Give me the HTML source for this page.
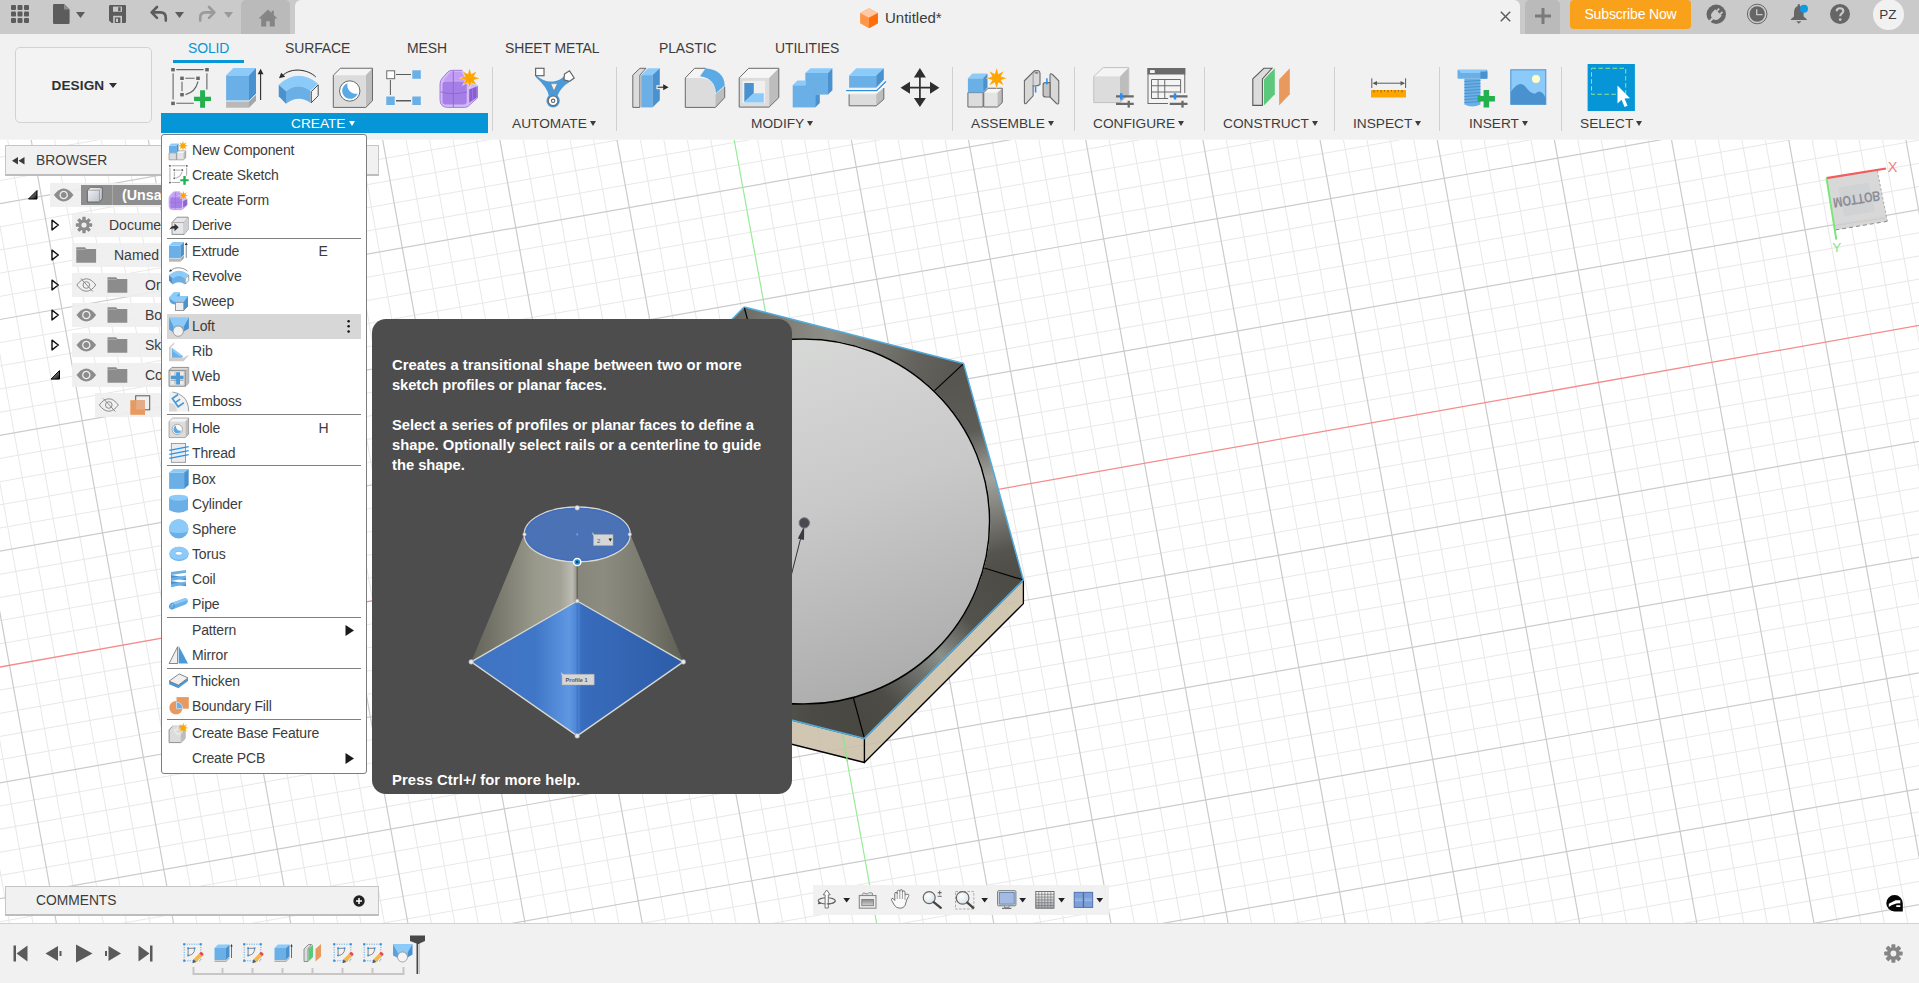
<!DOCTYPE html>
<html><head><meta charset="utf-8"><title>Fusion</title>
<style>
*{box-sizing:border-box;margin:0;padding:0}
html,body{width:1919px;height:983px;overflow:hidden;background:#fff;font-family:"Liberation Sans",sans-serif;color:#3c3c3c}
.abs{position:absolute}
#cv{position:absolute;left:0;top:0;width:1919px;height:983px}
#topbar{position:absolute;left:0;top:0;width:1919px;height:34px;background:#f1f1f1}
#toolbar{position:absolute;left:0;top:34px;width:1919px;height:105px;background:#f1f1f1}
.tbg{position:absolute;top:0;height:34px;background:#cacaca}
.tab{position:absolute;top:40px;font-size:13.95px;color:#3c3c3c;white-space:nowrap;letter-spacing:-0.1px}
.grp{position:absolute;top:115.5px;font-size:13.7px;color:#3c3c3c;white-space:nowrap}
.grp i{display:inline-block;width:0;height:0;border-left:3.5px solid transparent;border-right:3.5px solid transparent;border-top:5px solid #3c3c3c;margin-left:3px;vertical-align:2px}
.sep{position:absolute;top:67px;width:1px;height:64px;background:#d0d0d0}
svg{position:absolute;overflow:visible}
.mi{position:absolute;left:192px;font-size:14px;color:#3c3c3c;white-space:nowrap;line-height:16px;letter-spacing:-0.15px}
.msep{position:absolute;left:167px;width:194px;height:1px;background:#7f7f7f}
.brow{position:absolute;height:24px;background:rgba(238,238,238,.9)}
.btx{position:absolute;font-size:14px;color:#3c3c3c;white-space:nowrap;line-height:16px}
.tt{position:absolute;left:392px;font-size:14.75px;letter-spacing:0.05px;font-weight:bold;color:#fff;white-space:nowrap;line-height:20px}
</style></head><body>
<svg id="cv" width="1919" height="983" viewBox="0 0 1919 983">
<defs>
<clipPath id="cvclip"><rect x="0" y="139" width="1919" height="784"/></clipPath>
<linearGradient id="gCirc" x1="0.25" y1="0" x2="0.6" y2="1">
<stop offset="0" stop-color="#d9dbd9"/><stop offset="0.5" stop-color="#c9c9c9"/><stop offset="1" stop-color="#adadad"/></linearGradient>
<linearGradient id="gTop" gradientUnits="userSpaceOnUse" x1="744" y1="307" x2="964" y2="364">
<stop offset="0" stop-color="#6d6d67"/><stop offset="0.2" stop-color="#7f7f78"/><stop offset="0.4" stop-color="#90908a"/><stop offset="0.55" stop-color="#7e7e77"/><stop offset="0.8" stop-color="#63625d"/><stop offset="1" stop-color="#575651"/></linearGradient>
<linearGradient id="gRight" gradientUnits="userSpaceOnUse" x1="964" y1="364" x2="1023" y2="580">
<stop offset="0" stop-color="#55544f"/><stop offset="0.3" stop-color="#5d5c57"/><stop offset="0.52" stop-color="#a3a39d"/><stop offset="0.66" stop-color="#83837d"/><stop offset="0.85" stop-color="#55544f"/><stop offset="1" stop-color="#4b4a45"/></linearGradient>
<linearGradient id="gBR" gradientUnits="userSpaceOnUse" x1="1023" y1="580" x2="864" y2="738">
<stop offset="0" stop-color="#4b4a45"/><stop offset="0.3" stop-color="#53524d"/><stop offset="0.5" stop-color="#8b908b"/><stop offset="0.62" stop-color="#6f716c"/><stop offset="0.8" stop-color="#4d4c47"/><stop offset="1" stop-color="#484742"/></linearGradient>
<linearGradient id="gBot" gradientUnits="userSpaceOnUse" x1="864" y1="738" x2="646" y2="683">
<stop offset="0" stop-color="#484742"/><stop offset="0.25" stop-color="#4b4a45"/><stop offset="0.5" stop-color="#5a5a55"/><stop offset="1" stop-color="#4a4944"/></linearGradient>
</defs>
<g clip-path="url(#cvclip)">
<rect x="0" y="139" width="1919" height="784" fill="#fff"/>
<path d="M-945.9 -207.1L-578.7 1812.5M-923.2 -211.2L-556.0 1808.4M-900.5 -215.2L-533.3 1804.4M-877.8 -219.3L-510.6 1800.3M-832.4 -227.3L-465.2 1792.3M-809.7 -231.4L-442.5 1788.2M-787.0 -235.4L-419.8 1784.2M-764.3 -239.5L-397.1 1780.1M-718.9 -247.5L-351.7 1772.1M-696.2 -251.6L-329.0 1768.0M-673.5 -255.6L-306.3 1764.0M-650.8 -259.7L-283.6 1759.9M-605.4 -267.7L-238.2 1751.9M-582.7 -271.8L-215.5 1747.8M-560.0 -275.8L-192.8 1743.8M-537.3 -279.9L-170.1 1739.7M-491.9 -287.9L-124.7 1731.7M-469.2 -292.0L-102.0 1727.6M-446.5 -296.0L-79.3 1723.6M-423.8 -300.1L-56.6 1719.5M-378.4 -308.1L-11.2 1711.5M-355.7 -312.2L11.5 1707.4M-333.0 -316.2L34.2 1703.4M-310.3 -320.3L56.9 1699.3M-264.9 -328.3L102.3 1691.3M-242.2 -332.4L125.0 1687.2M-219.5 -336.4L147.7 1683.2M-196.8 -340.5L170.4 1679.1M-151.4 -348.5L215.8 1671.1M-128.7 -352.6L238.5 1667.0M-106.0 -356.6L261.2 1663.0M-83.3 -360.7L283.9 1658.9M-37.9 -368.7L329.3 1650.9M-15.2 -372.8L352.0 1646.8M7.5 -376.8L374.7 1642.8M30.2 -380.9L397.4 1638.7M75.6 -388.9L442.8 1630.7M98.3 -393.0L465.5 1626.6M121.0 -397.0L488.2 1622.6M143.7 -401.1L510.9 1618.5M189.1 -409.1L556.3 1610.5M211.8 -413.2L579.0 1606.4M234.5 -417.2L601.7 1602.4M257.2 -421.3L624.4 1598.3M302.6 -429.3L669.8 1590.3M325.3 -433.4L692.5 1586.2M348.0 -437.4L715.2 1582.2M370.7 -441.5L737.9 1578.1M416.1 -449.5L783.3 1570.1M438.8 -453.6L806.0 1566.0M461.5 -457.6L828.7 1562.0M484.2 -461.7L851.4 1557.9M529.6 -469.7L896.8 1549.9M552.3 -473.8L919.5 1545.8M575.0 -477.8L942.2 1541.8M597.7 -481.9L964.9 1537.7M643.1 -489.9L1010.3 1529.7M665.8 -494.0L1033.0 1525.6M688.5 -498.0L1055.7 1521.6M711.2 -502.1L1078.4 1517.5M756.6 -510.1L1123.8 1509.5M779.3 -514.2L1146.5 1505.4M802.0 -518.2L1169.2 1501.4M824.7 -522.3L1191.9 1497.3M870.1 -530.3L1237.3 1489.3M892.8 -534.4L1260.0 1485.2M915.5 -538.4L1282.7 1481.2M938.2 -542.5L1305.4 1477.1M983.6 -550.5L1350.8 1469.1M1006.3 -554.6L1373.5 1465.0M1029.0 -558.6L1396.2 1461.0M1051.7 -562.7L1418.9 1456.9M1097.1 -570.7L1464.3 1448.9M1119.8 -574.8L1487.0 1444.8M1142.5 -578.8L1509.7 1440.8M1165.2 -582.9L1532.4 1436.7M1210.6 -590.9L1577.8 1428.7M1233.3 -595.0L1600.5 1424.6M1256.0 -599.0L1623.2 1420.6M1278.7 -603.1L1645.9 1416.5M1324.1 -611.1L1691.3 1408.5M1346.8 -615.2L1714.0 1404.4M1369.5 -619.2L1736.7 1400.4M1392.2 -623.3L1759.4 1396.3M1437.6 -631.3L1804.8 1388.3M1460.3 -635.4L1827.5 1384.2M1483.0 -639.4L1850.2 1380.2M1505.7 -643.5L1872.9 1376.1M1551.1 -651.5L1918.3 1368.1M1573.8 -655.6L1941.0 1364.0M1596.5 -659.6L1963.7 1360.0M1619.2 -663.7L1986.4 1355.9M1664.6 -671.7L2031.8 1347.9M1687.3 -675.8L2054.5 1343.8M1710.0 -679.8L2077.2 1339.8M1732.7 -683.9L2099.9 1335.7M1778.1 -691.9L2145.3 1327.7M1800.8 -696.0L2168.0 1323.6M1823.5 -700.0L2190.7 1319.6M1846.2 -704.1L2213.4 1315.5M1891.6 -712.1L2258.8 1307.5M1914.3 -716.2L2281.5 1303.4M1937.0 -720.2L2304.2 1299.4M1959.7 -724.3L2326.9 1295.3M2005.1 -732.3L2372.3 1287.3M2027.8 -736.4L2395.0 1283.2M2050.5 -740.4L2417.7 1279.2M2073.2 -744.5L2440.4 1275.1M2118.6 -752.5L2485.8 1267.1M2141.3 -756.6L2508.5 1263.0M2164.0 -760.6L2531.2 1259.0M2186.7 -764.7L2553.9 1254.9M2232.1 -772.7L2599.3 1246.9M2254.8 -776.8L2622.0 1242.8M2277.5 -780.8L2644.7 1238.8M2300.2 -784.9L2667.4 1234.7M2345.6 -792.9L2712.8 1226.7M2368.3 -797.0L2735.5 1222.6M2391.0 -801.0L2758.2 1218.6M2413.7 -805.1L2780.9 1214.5M-737.5 -221.1L2327.0 -766.5M-733.4 -198.6L2331.1 -744.0M-729.4 -176.2L2335.1 -721.6M-725.3 -153.7L2339.2 -699.1M-717.1 -108.9L2347.4 -654.3M-713.0 -86.4L2351.5 -631.8M-709.0 -64.0L2355.5 -609.4M-704.9 -41.5L2359.6 -586.9M-696.7 3.3L2367.8 -542.1M-692.6 25.8L2371.9 -519.6M-688.6 48.2L2375.9 -497.2M-684.5 70.7L2380.0 -474.7M-676.3 115.5L2388.2 -429.9M-672.2 138.0L2392.3 -407.4M-668.2 160.4L2396.3 -385.0M-664.1 182.9L2400.4 -362.5M-655.9 227.7L2408.6 -317.7M-651.8 250.2L2412.7 -295.2M-647.8 272.6L2416.7 -272.8M-643.7 295.1L2420.8 -250.3M-635.5 339.9L2429.0 -205.5M-631.4 362.4L2433.1 -183.0M-627.4 384.8L2437.1 -160.6M-623.3 407.3L2441.2 -138.1M-615.1 452.1L2449.4 -93.3M-611.0 474.6L2453.5 -70.8M-607.0 497.0L2457.5 -48.4M-602.9 519.5L2461.6 -25.9M-594.7 564.3L2469.8 18.9M-590.6 586.8L2473.9 41.4M-586.6 609.2L2477.9 63.8M-582.5 631.7L2482.0 86.3M-574.3 676.5L2490.2 131.1M-570.2 699.0L2494.3 153.6M-566.2 721.4L2498.3 176.0M-562.1 743.9L2502.4 198.5M-553.9 788.7L2510.6 243.3M-549.8 811.2L2514.7 265.8M-545.8 833.6L2518.7 288.2M-541.7 856.1L2522.8 310.7M-533.5 900.9L2531.0 355.5M-529.4 923.4L2535.1 378.0M-525.4 945.8L2539.1 400.4M-521.3 968.3L2543.2 422.9M-513.1 1013.1L2551.4 467.7M-509.0 1035.6L2555.5 490.2M-505.0 1058.0L2559.5 512.6M-500.9 1080.5L2563.6 535.1M-492.7 1125.3L2571.8 579.9M-488.6 1147.8L2575.9 602.4M-484.6 1170.2L2579.9 624.8M-480.5 1192.7L2584.0 647.3M-472.3 1237.5L2592.2 692.1M-468.2 1260.0L2596.3 714.6M-464.2 1282.4L2600.3 737.0M-460.1 1304.9L2604.4 759.5M-451.9 1349.7L2612.6 804.3M-447.8 1372.2L2616.7 826.8M-443.8 1394.6L2620.7 849.2M-439.7 1417.1L2624.8 871.7M-431.5 1461.9L2633.0 916.5M-427.4 1484.4L2637.1 939.0M-423.4 1506.8L2641.1 961.4M-419.3 1529.3L2645.2 983.9M-411.1 1574.1L2653.4 1028.7M-407.0 1596.6L2657.5 1051.2M-403.0 1619.0L2661.5 1073.6M-398.9 1641.5L2665.6 1096.1M-390.7 1686.3L2673.8 1140.9M-386.6 1708.8L2677.9 1163.4M-382.6 1731.2L2681.9 1185.8M-378.5 1753.7L2686.0 1208.3" stroke="#e8e8e8" stroke-width="1" fill="none"/>
<path d="M-968.6 -203.1L-601.4 1816.5M-855.1 -223.3L-487.9 1796.3M-741.6 -243.5L-374.4 1776.1M-628.1 -263.7L-260.9 1755.9M-514.6 -283.9L-147.4 1735.7M-401.1 -304.1L-33.9 1715.5M-287.6 -324.3L79.6 1695.3M-174.1 -344.5L193.1 1675.1M-60.6 -364.7L306.6 1654.9M52.9 -384.9L420.1 1634.7M166.4 -405.1L533.6 1614.5M279.9 -425.3L647.1 1594.3M393.4 -445.5L760.6 1574.1M506.9 -465.7L874.1 1553.9M733.9 -506.1L1101.1 1513.5M847.4 -526.3L1214.6 1493.3M960.9 -546.5L1328.1 1473.1M1074.4 -566.7L1441.6 1452.9M1187.9 -586.9L1555.1 1432.7M1301.4 -607.1L1668.6 1412.5M1414.9 -627.3L1782.1 1392.3M1528.4 -647.5L1895.6 1372.1M1641.9 -667.7L2009.1 1351.9M1755.4 -687.9L2122.6 1331.7M1868.9 -708.1L2236.1 1311.5M1982.4 -728.3L2349.6 1291.3M2095.9 -748.5L2463.1 1271.1M2209.4 -768.7L2576.6 1250.9M2322.9 -788.9L2690.1 1230.7M-741.6 -243.5L2322.9 -788.9M-721.2 -131.3L2343.3 -676.7M-700.8 -19.1L2363.7 -564.5M-680.4 93.1L2384.1 -452.3M-660.0 205.3L2404.5 -340.1M-639.6 317.5L2424.9 -227.9M-619.2 429.7L2445.3 -115.7M-598.8 541.9L2465.7 -3.5M-578.4 654.1L2486.1 108.7M-537.6 878.5L2526.9 333.1M-517.2 990.7L2547.3 445.3M-496.8 1102.9L2567.7 557.5M-476.4 1215.1L2588.1 669.7M-456.0 1327.3L2608.5 781.9M-435.6 1439.5L2628.9 894.1M-415.2 1551.7L2649.3 1006.3M-394.8 1663.9L2669.7 1118.5" stroke="#cbcbcb" stroke-width="1.200" fill="none"/>
<!-- axes -->
<path d="M-217.5 705.7L1939.0 321.9" stroke="#f58b8b" stroke-width="1.3" fill="none"/>
<path d="M722.4 75.1L885.6 972.7" stroke="#98ec98" stroke-width="1.200" fill="none"/>
<!-- model: side faces -->
<path d="M1023.4 580L1023.4 603.6L864.4 762.5L864.4 738.4Z" fill="#ccc0aa" fill-opacity=".9" stroke="#000" stroke-width="1.3" stroke-linejoin="round"/>
<path d="M864.4 738.4L864.4 762.5L646.3 707.6L646.3 683.5Z" fill="#ccc0aa" fill-opacity=".9" stroke="#000" stroke-width="1.3" stroke-linejoin="round"/>
<path d="M842.800 734.500L847.500 761.500" stroke="#8fe68f" stroke-width="1.300"/>
<!-- loft faces -->
<path d="M744.2 307L963.6 363.6L934.5 390.6A186 183 0 0 0 754.3 345.2Z" fill="url(#gTop)"/>
<path d="M963.6 363.6L1023.4 580L984.2 568A186 183 0 0 0 934.5 390.6Z" fill="url(#gRight)"/>
<path d="M1023.4 580L864.4 738.4L853.3 697.5A186 183 0 0 0 984.2 568Z" fill="url(#gBR)"/>
<path d="M864.4 738.4L646.3 683.5L673.6 652A186 183 0 0 0 853.3 697.5Z" fill="url(#gBot)"/>
<path d="M646.3 683.5L586.2 466.7L624 475.7A186 183 0 0 0 673.6 652Z" fill="#4d4c47"/>
<path d="M586.2 466.7L744.2 307L754.3 345.2A186 183 0 0 0 624 475.7Z" fill="#686862"/>
<!-- loft edges -->
<path d="M744.2 307L754.3 345.2M963.6 363.6L934.5 390.6M1023.4 580L984.2 568M864.4 738.4L853.3 697.5" stroke="#000" stroke-width="1.2" fill="none"/>
<!-- circle -->
<ellipse cx="804" cy="521.5" rx="185.6" ry="182.6" fill="url(#gCirc)" stroke="#000" stroke-width="1.5"/>
<!-- outlines -->
<path d="M646.3 683.5L586.2 466.7L744.2 307" stroke="#50acde" stroke-width="1.500" fill="none"/>
<path d="M744.2 307L963.6 363.6L1023.4 580L864.4 738.4L646.3 683.5" stroke="#50acde" stroke-width="1.500" fill="none" stroke-linejoin="round"/>
<!-- origin marker -->
<path d="M787.500 590L801 537" stroke="#333" stroke-width="1"/>
<path d="M804.200 526L797.800 538.500L804 540Z" fill="#3a3a40"/>
<circle cx="804.3" cy="522.9" r="5.2" fill="#4a4852" stroke="#777" stroke-width="1"/>
<!-- view cube -->
<path d="M1834.600 225.500L1886.600 217.600L1887.300 221.300L1835.300 230Z" fill="#d2d2d2" fill-opacity=".92"/>
<path d="M1826.500 178.200L1877.300 170.600L1886.600 217.600L1834.600 225.500Z" fill="#d6d6d6" fill-opacity=".94"/>
<path d="M1838.500 187.500L1868.500 182.500L1875 211.500L1844 216.500Z" fill="#cfd0d2" fill-opacity=".75"/>
<path d="M1834.600 225.500L1886.600 217.600" stroke="#c4c4c4" stroke-width="0.800" fill="none"/>
<path d="M1877.300 170.600L1886.600 217.600L1887.300 221.300" stroke="#9a9a9a" stroke-width="0.800" stroke-dasharray="2.500 2" fill="none"/>
<path d="M1835.300 230L1887.300 221.300" stroke="#8a8a8a" stroke-width="1" stroke-dasharray="4 3" fill="none"/>
<path d="M1826.500 178.200L1885.900 168.500" stroke="#f25c5c" stroke-width="2.200"/>
<path d="M1826.500 178.200L1836.300 239.700" stroke="#76e676" stroke-width="1.900"/>
<text transform="translate(1832.600 198.300) rotate(-9.200) scale(1 -1.280)" font-size="11" font-weight="bold" fill="#8b8e97" font-family="Liberation Sans">MOTTOB</text>
<text x="1887.800" y="172" font-size="14.500" fill="#f47e7e" font-family="Liberation Sans">X</text>
<text x="1832.300" y="252" font-size="13.500" fill="#7fe67f" font-family="Liberation Sans">Y</text>
</g>
</svg>
<div id="topbar">
<div class="tbg" style="left:0;width:302px"></div>
<div class="abs" style="left:241px;top:0;width:49px;height:34px;background:#bababa;border-radius:5px 5px 0 0"></div>
<div class="abs" style="left:295px;top:0;width:12px;height:34px;background:#f1f1f1;border-radius:6px 0 0 0"></div>
<div class="tbg" style="left:1513px;width:406px"></div>
<div class="abs" style="left:1508px;top:0;width:12px;height:34px;background:#f1f1f1;border-radius:0 6px 0 0"></div>
<div class="abs" style="left:1525px;top:0;width:35px;height:34px;background:#bababa;border-radius:5px 5px 0 0"></div>
<!-- left icons -->
<svg style="left:11px;top:5px" width="18" height="18" viewBox="0 0 18 18" fill="#5c5c5c"><rect x="0" y="0" width="5" height="5" rx="1"/><rect x="6.5" y="0" width="5" height="5" rx="1"/><rect x="13" y="0" width="5" height="5" rx="1"/><rect x="0" y="6.5" width="5" height="5" rx="1"/><rect x="6.5" y="6.5" width="5" height="5" rx="1"/><rect x="13" y="6.5" width="5" height="5" rx="1"/><rect x="0" y="13" width="5" height="5" rx="1"/><rect x="6.5" y="13" width="5" height="5" rx="1"/><rect x="13" y="13" width="5" height="5" rx="1"/></svg>
<svg style="left:53px;top:4px" width="17" height="20" viewBox="0 0 17 20"><path d="M1.2 0h9.8l5.6 5.6V18.8a1.2 1.2 0 0 1-1.2 1.2H1.2A1.2 1.2 0 0 1 0 18.8V1.2A1.2 1.2 0 0 1 1.2 0Z" fill="#5c5c5c"/><path d="M11 0v5.6h5.6Z" fill="#8e8e8e"/></svg>
<svg style="left:76px;top:12px" width="9" height="6" viewBox="0 0 9 6"><path d="M0 0h9L4.5 6Z" fill="#5c5c5c"/></svg>
<svg style="left:109px;top:5px" width="17" height="18" viewBox="0 0 17 18"><path d="M1.2 0H16a1 1 0 0 1 1 1V17a1 1 0 0 1-1 1H2.6L0 15.4V1.2A1.2 1.2 0 0 1 1.200 0Z" fill="#5c5c5c"/><rect x="4" y="1.6" width="9" height="5.2" fill="#cacaca"/><rect x="9.2" y="2.2" width="2.4" height="4" fill="#5c5c5c"/><rect x="4.2" y="10.8" width="8.8" height="7.2" fill="#cacaca"/><rect x="5.8" y="12.4" width="5.6" height="5.6" fill="#5c5c5c"/><rect x="7" y="13.6" width="2" height="3.4" fill="#cacaca"/></svg>
<svg style="left:150px;top:6px" width="18" height="16" viewBox="0 0 18 16"><path d="M7 1L1.6 6.4L7 11.800" stroke="#5c5c5c" stroke-width="2.6" fill="none" stroke-linecap="round" stroke-linejoin="round"/><path d="M2.4 6.400H10.500Q15.800 6.400 15.800 12V14.600" stroke="#5c5c5c" stroke-width="2.6" fill="none" stroke-linecap="round"/></svg>
<svg style="left:175px;top:12px" width="9" height="6" viewBox="0 0 9 6"><path d="M0 0h9L4.5 6Z" fill="#5c5c5c"/></svg>
<svg style="left:198px;top:6px" width="18" height="16" viewBox="0 0 18 16"><path d="M11 1L16.400 6.4L11 11.800" stroke="#9a9a9a" stroke-width="2.6" fill="none" stroke-linecap="round" stroke-linejoin="round"/><path d="M15.600 6.400H7.500Q2.200 6.400 2.200 12V14.600" stroke="#9a9a9a" stroke-width="2.600" fill="none" stroke-linecap="round"/></svg>
<svg style="left:224px;top:12px" width="9" height="6" viewBox="0 0 9 6"><path d="M0 0h9L4.5 6Z" fill="#9a9a9a"/></svg>
<svg style="left:258px;top:9px" width="20" height="18" viewBox="0 0 20 18"><path d="M10 0.500L0.500 9.400H3.200V17.500H8.300V12.200H11.700V17.500H16.800V9.400H19.500L15.800 5.900V1.800H13.600V3.900Z" fill="#858585"/></svg>
<!-- title -->
<svg style="left:860px;top:7.500px" width="18" height="20.500" viewBox="0 0 18 20.500"><path d="M9 0.300L17.900 5V15.300L9 20.200L0.100 15.300V5Z" fill="#ff9548"/><path d="M9 0.300L17.900 5L9 9.800L0.100 5Z" fill="#ffc9a3"/><path d="M9 9.800L17.900 5V15.300L9 20.200Z" fill="#ff6e08"/></svg>
<div class="abs" style="left:885px;top:8.800px;font-size:15px;line-height:18px;color:#3c3c3c;white-space:nowrap">Untitled*</div>
<svg style="left:1500px;top:11px" width="11" height="11" viewBox="0 0 11 11"><path d="M0.800 0.800L10.200 10.200M10.200 0.800L0.800 10.200" stroke="#5c5c5c" stroke-width="1.5"/></svg>
<svg style="left:1535px;top:8px" width="16" height="16" viewBox="0 0 16 16"><path d="M8 0V16M0 8H16" stroke="#7a7a7a" stroke-width="3"/></svg>
<div class="abs" style="left:1570px;top:0;width:121px;height:29px;background:#f9a11b;border-radius:4px;color:#fff;font-size:14.1px;line-height:28px;text-align:center;letter-spacing:-0.2px">Subscribe Now</div>
<!-- right icons -->
<svg style="left:1706px;top:3.500px" width="21" height="21" viewBox="0 0 21 21"><circle cx="10.250" cy="10.250" r="9.700" fill="#666"/><g transform="translate(10.250 10.800) rotate(45)"><path d="M-4.600 -3.200H4.600V0.500Q4.600 5.200 0 5.200Q-4.600 5.200 -4.600 0.500Z" fill="#cacaca"/><path d="M0 4.500V11" stroke="#cacaca" stroke-width="2.200"/><path d="M-2.300 -6.500V-3M2.300 -6.500V-3" stroke="#cacaca" stroke-width="1.700"/></g></svg>
<svg style="left:1746px;top:3px" width="22" height="22" viewBox="0 0 22 22"><circle cx="11.200" cy="11" r="9.800" fill="none" stroke="#666" stroke-width="1"/><circle cx="11.200" cy="11" r="7.700" fill="#666"/><path d="M10.700 6.200V11.600H16.500" stroke="#cacaca" stroke-width="1.300" fill="none"/></svg>
<svg style="left:1788px;top:3px" width="22" height="23" viewBox="0 0 22 23"><path d="M9.700 1.200H11.900V3C14.500 4 15.600 6.500 15.600 10V13.500L18.800 16.200V17H2.800V16.200L6 13.500V10C6 6.500 7.100 4 9.700 3Z" fill="#666"/><path d="M8.200 18.200H13.400L10.800 20.800Z" fill="#666"/><circle cx="16" cy="5.750" r="4" fill="#0d9be3"/></svg>
<svg style="left:1829px;top:3px" width="22" height="22" viewBox="0 0 22 22"><circle cx="11" cy="11" r="10" fill="#666"/><path d="M7.700 8.300C7.700 6.300 9.200 5.300 11 5.300S14.300 6.400 14.300 8.200C14.300 10.400 11.200 10.500 11.200 13.200" stroke="#cacaca" stroke-width="2.100" fill="none"/><circle cx="11.200" cy="16.600" r="1.350" fill="#cacaca"/></svg>
<div class="abs" style="left:1872.500px;top:-1.500px;width:31px;height:31px;border-radius:16px;background:#f1f1f1;font-size:13.5px;line-height:31px;text-align:center;color:#3c3c3c">PZ</div>
</div>
<div id="toolbar"></div><div id="tbline" class="abs" style="left:0;top:139px;width:1919px;height:1px;background:#f5f5f5"></div>
<div class="abs" style="left:15px;top:47px;width:137px;height:76px;border:1px solid #d2d2d2;border-radius:5px;background:#f3f3f3"></div>
<div class="abs" style="left:51.500px;top:77.500px;font-size:13.600px;font-weight:bold;color:#303030;line-height:16px;letter-spacing:0.1px">DESIGN</div>
<svg style="left:109px;top:83px" width="8" height="5" viewBox="0 0 8 5"><path d="M0 0h8L4 5Z" fill="#303030"/></svg>
<div class="tab" style="left:188px;color:#0696d7">SOLID</div>
<div class="abs" style="left:173px;top:60px;width:71px;height:3px;background:#0696d7"></div>
<div class="tab" style="left:285px">SURFACE</div>
<div class="tab" style="left:407px">MESH</div>
<div class="tab" style="left:505px">SHEET METAL</div>
<div class="tab" style="left:659px">PLASTIC</div>
<div class="tab" style="left:775px">UTILITIES</div>
<div class="abs" style="left:161px;top:113px;width:327px;height:20px;background:#0696d7"></div>
<div class="grp" style="left:291px;color:#fff">CREATE<i style="border-top-color:#fff"></i></div>
<div class="grp" style="left:512px">AUTOMATE<i></i></div>
<div class="grp" style="left:751px">MODIFY<i></i></div>
<div class="grp" style="left:971px">ASSEMBLE<i></i></div>
<div class="grp" style="left:1093px">CONFIGURE<i></i></div>
<div class="grp" style="left:1223px">CONSTRUCT<i></i></div>
<div class="grp" style="left:1353px">INSPECT<i></i></div>
<div class="grp" style="left:1469px">INSERT<i></i></div>
<div class="grp" style="left:1580px">SELECT<i></i></div>
<div class="sep" style="left:492px"></div>
<div class="sep" style="left:616px"></div>
<div class="sep" style="left:952px"></div>
<div class="sep" style="left:1074px"></div>
<div class="sep" style="left:1204px"></div>
<div class="sep" style="left:1334px"></div>
<div class="sep" style="left:1439px"></div>
<div class="sep" style="left:1561px"></div>
<svg style="left:0;top:0" width="1919" height="140" viewBox="0 0 1919 140">
<defs>
<path id="star8" d="M0 -10L1.700 -4.100L7.100 -7.100L4.100 -1.700L10 0L4.100 1.700L7.100 7.100L1.700 4.100L0 10L-1.700 4.100L-7.100 7.100L-4.100 1.700L-10 0L-4.100 -1.700L-7.100 -7.100L-1.700 -4.100Z"/>
</defs>
<!-- sketch -->
<g id="icSketch">
<g fill="#666">
<rect x="171.200" y="68" width="3.600" height="3.400"/><rect x="205.200" y="68" width="3.600" height="3.400"/><rect x="171.200" y="101.700" width="3.600" height="3.400"/>
<rect x="180.200" y="76.600" width="3.600" height="3.400"/><rect x="196.200" y="76.600" width="3.600" height="3.400"/><rect x="180.200" y="93" width="3.600" height="3.400"/>
</g>
<path d="M176.300 69.600H203.600M173.100 73.200V99.500M206.900 73.200V89.500M176.300 103.300H193.800M185.300 78.300H194.600M182 81.700V91.200" stroke="#666" stroke-width="1.100" fill="none"/>
<path d="M198 81.500Q195.500 92 185.500 94.600" stroke="#666" stroke-width="1.100" fill="none"/>
<path d="M194 96.800H200.100V90.200H205V96.800H211V101H205V107.800H200.100V101H194Z" fill="#22b14c"/>
</g>
<!-- extrude -->
<g id="icExtrude">
<path d="M226.100 101.200H249V107.700H226.100Z" fill="#b8b8b8"/><path d="M249 101.200L256 94.500V100.700L249 107.700Z" fill="#a6a6a6"/>
<path d="M226.100 75.300H249V100.700H226.100Z" fill="#6ab0e6"/><path d="M226.100 75.300L233.300 68H256L249 75.300Z" fill="#8ccbf9"/><path d="M249 75.300L256 68V93.700L249 100.700Z" fill="#4a92cf"/>
<path d="M226.100 101H249L256 94.200" stroke="#e8f2fb" stroke-width="0.700" fill="none"/><path d="M260.600 72.800V100" stroke="#2a2a2a" stroke-width="1.100"/><path d="M260.600 68.700L257.700 74.200H263.500Z" fill="#2a2a2a"/>
</g>
<!-- revolve -->
<g id="icRevolve">
<path d="M315.800 77C308.500 69.500 291 66.500 281.800 76.300" stroke="#2a2a2a" stroke-width="1" fill="none"/><path d="M279 78.200L281.200 72.800L285.200 76.700Z" fill="#2a2a2a"/>
<path d="M278.750 84.700Q298.300 67.500 318.200 83.800L310.400 90.750Q298.300 81.500 286 91.200Z" fill="#8ccbf9"/>
<path d="M286 91.200Q298.300 81.500 310.400 90.750V102.800Q298.300 94.500 286 103.700Z" fill="#6ab0e6"/>
<path d="M278.750 84.700L286 91.200V103.700L278.750 96.200Z" fill="#4a92cf"/>
<path d="M311.250 91.600L318.200 84.900V95.750L311.250 102.800Z" fill="#f4f4f4" stroke="#4a4a4a" stroke-width="1"/>
</g>
<!-- hole -->
<g id="icHole">
<path d="M333.300 75.300L340.400 68.250H372.500L365.800 75.300Z" fill="#f4f4f4"/><path d="M365.800 75.300L372.500 68.250V100.750L365.800 107.400Z" fill="#bdbdbd"/><path d="M333.300 75.300H365.800V107.400H333.300Z" fill="#dcdcdc"/>
<path d="M333.300 75.300L340.400 68.250H372.500V100.750L365.800 107.400H333.300Z" fill="none" stroke="#6a6a6a" stroke-width="1"/>
<circle cx="349.750" cy="91" r="10.200" fill="#fff" stroke="#6a6a6a" stroke-width="1"/>
<path d="M347.500 83.300A8 8 0 1 0 357.700 93.500A8.500 8.500 0 0 1 347.500 83.300Z" fill="#5aaae6"/>
</g>
<!-- pattern -->
<rect x="386.750" y="70.800" width="7.900" height="7.900" fill="#fff" stroke="#6a6a6a" stroke-width="1"/>
<rect x="412.300" y="70.300" width="8.500" height="8.500" fill="#6ab0e6"/><rect x="386.250" y="96.500" width="8.500" height="8.500" fill="#6ab0e6"/><rect x="412.300" y="96.500" width="8.500" height="8.500" fill="#6ab0e6"/>
<path d="M396 74.500H411M390.400 80V95" stroke="#5a5a5a" stroke-width="1" fill="none"/><path d="M396 100.750H411" stroke="#5a5a5a" stroke-width="1.500"/>
<!-- form -->
<g id="icForm">
<path d="M440 84Q440 80.500 442.500 77.800L447.800 72Q449.500 70.300 452 70.300H462L477.500 86.200V97.800L468.500 106Q467 107.400 464.500 107.400H448Q440 107.400 440 99.500Z" fill="#d3b9f6"/>
<path d="M443.300 80.750L450.800 71.800H461.700L465.800 80.750Z" fill="#c29df6"/>
<path d="M445.500 81.600H463.700Q466.700 81.600 466.700 84.600V101.500Q466.700 104.500 463.700 104.500H445.500Q442.500 104.500 442.500 101.500V84.600Q442.500 81.600 445.500 81.600Z" fill="#a67ee8"/>
<path d="M469.200 89.500L476.800 86.500V97.500L469.200 102.800Z" fill="#8a5fd0"/><path d="M472.500 88.200V100.500" stroke="#9f78de" stroke-width="0.800"/>
<path d="M453.300 70.800V107M440.500 91.800Q453 95.500 467 92" stroke="#8f68cc" stroke-width="0.900" fill="none"/>
<path d="M440 84Q440 80.500 442.500 77.800L447.800 72Q449.500 70.300 452 70.300H462L477.500 86.200V97.800L468.500 106Q467 107.400 464.500 107.400H448Q440 107.400 440 99.500Z" fill="none" stroke="#9468d8" stroke-width="0.800"/>
<use href="#star8" transform="translate(469.600 78.250) scale(1.080)" fill="#f2f2f2"/>
<use href="#star8" transform="translate(469.600 78.250) scale(0.960)" fill="#ffa500"/>
</g>
<!-- automate -->
<path d="M535.9 75.2Q544.7 82.700 553.500 81.400Q560 80.800 564 76.300L569.500 82Q560.500 87.200 557.200 96.500H549Q547.400 87.200 535.900 77.300Z" fill="#4a9ad9"/>
<path d="M550.700 83.600H557.500L553.900 91Z" fill="#f1f1f1" stroke="#777" stroke-width="0.600"/>
<circle cx="553.100" cy="100.800" r="6.700" fill="#4a9ad9"/>
<circle cx="553.100" cy="100.800" r="4.800" fill="#fff" stroke="#666" stroke-width="1.100"/><circle cx="553.100" cy="100.800" r="1.700" fill="#fff" stroke="#666" stroke-width="1.100"/>
<rect x="535.600" y="68.300" width="8.400" height="7.400" fill="#fff" stroke="#666" stroke-width="1.200"/>
<path d="M564.500 74L569.500 70.800L574.200 78L569.600 81.300L564 79.800Z" fill="#fff" stroke="#666" stroke-width="1.200"/>
<!-- press pull -->
<path d="M632.800 75.100L639.900 68.300H646L639.900 75.100V107.400H632.800Z" fill="#dcdcdc" stroke="#6a6a6a" stroke-width="1"/>
<path d="M641.200 75.100H652.500V107.400H641.200Z" fill="#6ab0e6"/><path d="M641.200 75.100L648.100 68.300H659.800L652.500 75.100Z" fill="#8ccbf9"/><path d="M652.500 75.100L659.800 68.300V100.300L652.500 107.400Z" fill="#4a92cf"/>
<rect x="656.400" y="85.200" width="6" height="4" fill="#f1f1f1"/>
<path d="M657.600 87.200H664" stroke="#2a2a2a" stroke-width="1.100"/><path d="M668.600 87.200L663.200 84.200V90.200Z" fill="#2a2a2a"/>
<!-- fillet -->
<path d="M685.300 77.900L694.600 68.300H706L697 77.900Z" fill="#f4f4f4"/>
<path d="M685.300 77.900H701Q715.400 78.500 715.400 94.300V107.400H685.300Z" fill="#dcdcdc"/>
<path d="M715.400 94.300L724.700 86.600V97.600L715.400 107.400Z" fill="#bdbdbd"/>
<path d="M685.300 107.400V77.900L694.600 68.300H705.600" fill="none" stroke="#6a6a6a" stroke-width="1"/><path d="M685.300 107.400H715.400L724.700 97.600V86.600" fill="none" stroke="#6a6a6a" stroke-width="1"/>
<path d="M705.600 68.300Q724 70 724.700 85.500L715.900 93.200Q715 78 700.100 76.200Z" fill="#5aaae6"/>
<!-- shell -->
<path d="M739.200 77.900L748.700 68.300H778.800L769.100 77.900Z" fill="#f6f6f6"/><path d="M769.100 77.900L778.800 68.300V97.600L769.100 107.100Z" fill="#bdbdbd"/><path d="M739.200 77.900H769.100V107.100H739.200Z" fill="#dcdcdc"/>
<path d="M739.200 77.900L748.700 68.300H778.800V97.600L769.100 107.100H739.200Z" fill="none" stroke="#6a6a6a" stroke-width="1"/>
<rect x="742.400" y="80.800" width="22.700" height="22.200" fill="#efefef"/>
<path d="M744.300 83.100H753.800V93.200L744.300 101.900Z" fill="#4a92cf"/><path d="M753.800 93.200H763.800V102.500H744.300V101.900Z" fill="#8ccbf9"/>
<!-- combine -->
<path d="M805.300 72.900H828V94.600H805.300Z" fill="#6ab0e6"/><path d="M805.300 72.900L810.500 68.300H832.400L828 72.900Z" fill="#8ccbf9"/><path d="M828 72.900L832.400 68.300V90.200L828 94.600Z" fill="#4a92cf"/>
<path d="M792.700 85.200H815.200V107.400H792.700Z" fill="#6ab0e6"/><path d="M792.700 85.200L797.400 80.400H805.300V85.200Z" fill="#8ccbf9"/><path d="M815.200 94.600H819.800V103L815.200 107.400Z" fill="#4a92cf"/>
<!-- offset face -->
<path d="M849.100 94.300H876.200V105.800H849.100Z" fill="#dcdcdc"/><path d="M876.200 94.300L883.800 87.700V99.200L876.200 105.800Z" fill="#bdbdbd"/>
<path d="M849.100 94.300V105.800H876.200L883.800 99.200V88" fill="none" stroke="#6a6a6a" stroke-width="1"/>
<path d="M849.100 75.400H876.200V87.700H849.100Z" fill="#6ab0e6"/><path d="M849.100 75.400L856.300 68.300H883.800L876.200 75.400Z" fill="#8ccbf9"/><path d="M876.200 75.400L883.800 68.300V79.500L876.200 87.700Z" fill="#4a92cf"/>
<path d="M846.100 91.700H876.700L886 82.500" fill="none" stroke="#fff" stroke-width="2.400"/>
<path d="M846.100 90.700H876.700L886 81.500" fill="none" stroke="#2d8ee0" stroke-width="1.300"/>
<!-- move -->
<path d="M919.900 76V99M908 87.700H932" stroke="#2e2e2e" stroke-width="1.700"/>
<path d="M919.900 68L925.900 77.500H913.900ZM919.900 107.100L925.900 98H913.900ZM900.500 87.700L910 81.700V93.700ZM939.400 87.700L930 81.700V93.700Z" fill="#2e2e2e"/>
<!-- new component -->
<g id="icNewComp">
<path d="M967.900 92.600H983.100V107H967.900Z" fill="#dcdcdc" stroke="#6a6a6a" stroke-width="1"/>
<path d="M983.750 92.600H997.500V107H983.750Z" fill="#e4e4e4"/><path d="M983.750 92.600L988.100 88.250H1002.250L997.500 92.600Z" fill="#f6f6f6"/><path d="M997.500 92.600L1002.250 88.250V102.600L997.500 107Z" fill="#bdbdbd"/>
<path d="M983.750 92.600V107H997.500L1002.250 102.600V88.250H988.100Z" fill="none" stroke="#6a6a6a" stroke-width="1"/>
<path d="M967.900 78.250H983.100V92.600H967.900Z" fill="#6ab0e6"/><path d="M967.900 78.250L972.500 73.500H987.500L983.100 78.250Z" fill="#8ccbf9"/><path d="M983.100 78.250L987.500 73.500V87.600L983.100 92.600Z" fill="#4a92cf"/>
<use href="#star8" transform="translate(996.600 78.250) scale(1.100)" fill="#f2f2f2"/>
<use href="#star8" transform="translate(996.600 78.250)" fill="#ffa500"/>
</g>
<!-- joint -->
<path d="M1024.400 80.750L1034.400 70.750Q1040 69.500 1040 73.500V84.500Q1037 86.500 1033.100 85.750V95.750L1026 103.500Q1024.400 104.500 1024.400 102Z" fill="#d8d8d8" stroke="#6a6a6a" stroke-width="1.100"/>
<path d="M1033.100 85.750V73.500Q1034 70.800 1036.500 70.800" fill="none" stroke="#8a8a8a" stroke-width="0.800"/>
<ellipse cx="1036.500" cy="72.800" rx="2" ry="1.100" fill="#8a8a8a"/>
<path d="M1050 75.500Q1050 72.500 1052.500 74.500L1058.750 80.750V102Q1058.750 105 1056.500 103.500L1050 97Z" fill="#d8d8d8" stroke="#6a6a6a" stroke-width="1.100"/>
<path d="M1043.100 84.500Q1043.100 82.600 1046 82.600H1050V97H1046Q1043.100 97 1043.100 95Z" fill="#c4c4c4" stroke="#6a6a6a" stroke-width="1.100"/>
<path d="M1035.600 86.400V92.600M1046.900 78.250V84.500" stroke="#1e90ff" stroke-width="1.500"/>
<!-- configure 1 -->
<path d="M1093.750 76.400L1103.100 67.600H1128.750L1120 76.400Z" fill="#f4f4f4"/><path d="M1120 76.400L1128.750 67.600V94.500L1120 102.600Z" fill="#bdbdbd"/><path d="M1093.750 76.400H1120V102.600H1093.750Z" fill="#dcdcdc"/>
<path d="M1093.750 76.400L1103.100 67.600H1128.750V94.500L1120 102.600H1093.750Z" fill="none" stroke="#c2c2c2" stroke-width="1"/>
<path d="M1116 96.400H1133.750M1116 103.900H1133.750" stroke="#6a6a6a" stroke-width="2.300"/><path d="M1128.750 100.750V107.600" stroke="#6a6a6a" stroke-width="2.300"/><path d="M1121.250 93.250V99.500" stroke="#1e90ff" stroke-width="2.500"/>
<!-- configure 2 -->
<rect x="1148" y="68.500" width="36.750" height="35" fill="#f4f4f4" stroke="#6a6a6a" stroke-width="1"/><rect x="1147.500" y="68" width="37.750" height="6.500" fill="#6a6a6a"/><rect x="1150" y="70.100" width="4.750" height="2.900" fill="#f4f4f4"/>
<path d="M1151.500 79.500H1180.600V98.500H1151.500ZM1158.100 79.500V98.500M1164.750 79.500V98.500M1151.500 85.750H1180.600M1151.500 92H1180.600" fill="none" stroke="#6a6a6a" stroke-width="1"/>
<rect x="1168" y="93" width="20" height="13" fill="#f1f1f1"/>
<path d="M1169.750 96.400H1187.500M1169.750 103.900H1187.500" stroke="#6a6a6a" stroke-width="2.300"/><path d="M1182.500 100.750V107.600" stroke="#6a6a6a" stroke-width="2.300"/><path d="M1175 93.250V99.500" stroke="#1e90ff" stroke-width="2.500"/>
<!-- construct -->
<path d="M1252.800 78.900L1263.900 68.250H1272L1262.400 78.900V105.400H1252.800Z" fill="#dcdcdc" stroke="#5a5a5a" stroke-width="1.100"/>
<path d="M1263.900 79.400L1274.800 68.250V94.300L1263.900 105.400Z" fill="#5cc87c"/>
<path d="M1279.100 79.400L1289.800 68.250V94.300L1279.100 105.400Z" fill="#e8995e"/>
<!-- inspect -->
<rect x="1371" y="90" width="35" height="7.500" fill="#ffa500"/>
<path d="M1374 90V92.500M1377.500 90V91.500M1381 90V92.500M1384.500 90V91.500M1388 90V92.500M1391.500 90V91.500M1395 90V92.500M1398.500 90V91.500M1402 90V92.500" stroke="#6a5a2a" stroke-width="0.800"/>
<path d="M1371.800 78.300V88M1405.600 78.300V88M1374 83.200H1403.500" stroke="#5a5a5a" stroke-width="1"/><path d="M1372.500 83.200L1377 81V85.400ZM1405 83.200L1400.500 81V85.400Z" fill="#5a5a5a"/>
<!-- insert bolt -->
<path d="M1464.400 78.700H1480.400V104.500Q1472.400 108.500 1464.400 104.500Z" fill="#6ab0e6"/>
<path d="M1464.400 81.500L1480.400 80.500M1464.400 84.500L1480.400 83.500M1464.400 87.500L1480.400 86.500M1464.400 90.500L1480.400 89.500M1464.400 93.500L1480.400 92.500M1464.400 96.500L1480.400 95.500M1464.400 99.500L1480.400 98.500M1464.400 102.500L1480.400 101.500" stroke="#4a92cf" stroke-width="1"/>
<path d="M1458.500 69.750H1486.400Q1487.400 69.750 1487.400 71V77.500Q1487.400 78.700 1486.400 78.700H1458.500Q1457.500 78.700 1457.500 77.500V71Q1457.500 69.750 1458.500 69.750Z" fill="#6ab0e6"/>
<path d="M1458.500 69.750H1486.400L1484 73H1461Z" fill="#8ccbf9"/><path d="M1480.400 71.500H1487.400V78.700H1480.400Z" fill="#4a92cf"/>
<path d="M1477.600 96H1483.600V90H1489.100V96H1494.900V101.400H1489.100V107.600H1483.600V101.400H1477.600Z" fill="#22b14c"/>
<!-- insert image -->
<rect x="1510.800" y="69.800" width="35" height="34.500" fill="#8ccbf9" stroke="#4a92cf" stroke-width="1"/>
<path d="M1510.800 92Q1520 78 1527 88.500Q1531 94 1535.500 93.500Q1541 88 1545.800 98V104.300H1510.800Z" fill="#4a92cf"/>
<circle cx="1536" cy="78.900" r="4" fill="#ffffc8"/>
<!-- select -->
<rect x="1587.600" y="64" width="47.300" height="47" fill="#0696d7"/>
<rect x="1591.500" y="68.250" width="34.200" height="26" fill="none" stroke="#8fe890" stroke-width="1" stroke-dasharray="4.500 2.500"/>
<path d="M1617.500 85.500V103.500L1621.500 99.800L1624.600 107L1627.600 105.700L1624.500 98.600L1630 98.300Z" fill="#fff"/>
</svg>
<!-- browser header -->
<div class="abs" style="left:5px;top:145px;width:374px;height:31px;background:#f1f1f1;border:1px solid #c6c6c6;border-bottom:2px solid #bdbdbd"></div>
<svg style="left:11.500px;top:156.500px" width="12.500" height="7.500" viewBox="0 0 13 9" preserveAspectRatio="none"><path d="M6.200 0V9L0 4.500ZM13 0V9L6.800 4.500Z" fill="#3a3a3a"/></svg>
<div class="btx" style="left:36px;top:152.700px;font-size:13.800px">BROWSER</div>
<!-- rows -->
<div class="brow" style="left:50px;top:183px;width:310px"></div>
<div class="abs" style="left:81px;top:185px;width:280px;height:20px;background:#8e8e8e"></div>
<div class="abs" style="left:112px;top:185px;width:1px;height:20px;background:#a8a8a8"></div>
<div class="brow" style="left:72px;top:213px;width:290px"></div>
<div class="brow" style="left:72px;top:243px;width:290px"></div>
<div class="brow" style="left:72px;top:273px;width:290px"></div>
<div class="brow" style="left:72px;top:303px;width:290px"></div>
<div class="brow" style="left:72px;top:333px;width:290px"></div>
<div class="brow" style="left:72px;top:363px;width:290px"></div>
<div class="brow" style="left:95px;top:393px;width:265px"></div>
<div class="btx" style="left:122px;top:187px;font-weight:bold;color:#fff;font-size:14.3px">(Unsaved)</div>
<div class="btx" style="left:109px;top:217px">Document Settings</div>
<div class="btx" style="left:114px;top:247px">Named Views</div>
<div class="btx" style="left:145px;top:277px">Origin</div>
<div class="btx" style="left:145px;top:307px">Bodies</div>
<div class="btx" style="left:145px;top:337px">Sketches</div>
<div class="btx" style="left:145px;top:367px">Construction</div>
<svg style="left:0;top:0" width="200" height="430" viewBox="0 0 200 430">
<defs>
<g id="eye"><path d="M-9.800 0Q-5 -6.500 0 -6.500Q5 -6.500 9.800 0Q5 6.500 0 6.500Q-5 6.500 -9.800 0Z" fill="#8c8c8c"/><circle cx="0" cy="0" r="3.600" fill="none" stroke="#eee" stroke-width="1.300"/></g>
<g id="eyeoff"><path d="M-9.500 0Q-5 -6.200 0 -6.200Q5 -6.200 9.500 0Q5 6.200 0 6.200Q-5 6.200 -9.500 0Z" fill="none" stroke="#8c8c8c" stroke-width="1"/><circle cx="0" cy="0" r="3.300" fill="none" stroke="#8c8c8c" stroke-width="1"/><path d="M-5.500 -6.500L6.500 6.500" stroke="#8c8c8c" stroke-width="1"/></g>
<g id="fold"><path d="M0 0H8.600L10 1.800H19.800V15.500H0Z" fill="#8c8c8c"/><path d="M0.500 2.300H9" stroke="#b5b5b5" stroke-width="0.700"/></g>
<path id="tri" d="M0.700 0.800L7 5.700L0.700 10.600Z" fill="#fff" stroke="#111" stroke-width="1.400" stroke-linejoin="round"/>
<linearGradient id="gTri" x1="0" y1="0" x2="1" y2="1"><stop offset="0.300" stop-color="#999"/><stop offset="1" stop-color="#000"/></linearGradient>
<path id="trid" d="M9 0V8.500H0.500Z" fill="url(#gTri)" stroke="#000" stroke-width="1" stroke-linejoin="round"/>
<linearGradient id="gCmp" x1="0" y1="0" x2="1" y2="1"><stop offset="0" stop-color="#f4f6fa"/><stop offset="1" stop-color="#b9bcc6"/></linearGradient>
</defs>
<use href="#trid" x="28" y="190.500"/>
<use href="#eye" x="63.700" y="195"/>
<path d="M87.400 190.200L90.500 187.300H102.300V198.800L99.400 202H87.400Z" fill="url(#gCmp)" stroke="#555" stroke-width="0.800"/><path d="M87.400 190.200H99.400V202M99.400 190.200L102.300 187.300" fill="none" stroke="#888" stroke-width="0.700"/>
<use href="#tri" x="51.300" y="219.300"/><use href="#tri" x="51.300" y="249.300"/><use href="#tri" x="51.300" y="279.300"/><use href="#tri" x="51.300" y="309.300"/><use href="#tri" x="51.300" y="339.300"/>
<use href="#trid" x="50.500" y="370.600"/>
<!-- gear -->
<g transform="translate(84 225)" fill="#8c8c8c"><circle r="5.600"/><g id="teeth"><rect x="-1.700" y="-8.200" width="3.400" height="16.400" rx="0.600"/><rect x="-1.700" y="-8.200" width="3.400" height="16.400" rx="0.600" transform="rotate(45)"/><rect x="-1.700" y="-8.200" width="3.400" height="16.400" rx="0.600" transform="rotate(90)"/><rect x="-1.700" y="-8.200" width="3.400" height="16.400" rx="0.600" transform="rotate(135)"/></g><circle r="2.600" fill="#eee"/></g>
<use href="#fold" x="76.300" y="247.200"/>
<use href="#eyeoff" x="86.300" y="285"/><use href="#fold" x="107.500" y="277.200"/>
<use href="#eye" x="86.300" y="315"/><use href="#fold" x="107.500" y="307.200"/>
<use href="#eye" x="86.300" y="345"/><use href="#fold" x="107.500" y="337.200"/>
<use href="#eye" x="86.300" y="375"/><use href="#fold" x="107.500" y="367.200"/>
<use href="#eyeoff" x="108.800" y="405"/>
<rect x="135.700" y="395.800" width="14" height="14" fill="none" stroke="#5a5a5a" stroke-width="1"/>
<rect x="130.300" y="400.200" width="14.700" height="14.600" fill="#e8995e"/><rect x="136.200" y="400.200" width="8.800" height="9.300" fill="#e2ad88"/>
</svg>
<!-- comments -->
<div class="abs" style="left:5px;top:886px;width:374px;height:30px;background:#f1f1f1;border:1px solid #c6c6c6;border-bottom:2px solid #bdbdbd"></div>
<div class="btx" style="left:36px;top:893px;font-size:13.8px">COMMENTS</div>
<svg style="left:353px;top:895px" width="12" height="12" viewBox="0 0 12 12"><circle cx="6" cy="6" r="5.700" fill="#222"/><path d="M6 3V9M3 6H9" stroke="#fff" stroke-width="1.500"/></svg>
<div class="abs" style="left:161px;top:134px;width:206px;height:640px;background:#fff;border:1px solid #7d7d7d;border-radius:3px"></div>
<div class="abs" style="left:167px;top:314px;width:194px;height:25px;background:#d7d7d7"></div>
<div class="msep" style="top:238.0px"></div>
<div class="msep" style="top:414.0px"></div>
<div class="msep" style="top:465.0px"></div>
<div class="msep" style="top:617.0px"></div>
<div class="msep" style="top:668.0px"></div>
<div class="msep" style="top:719.0px"></div>
<div class="mi" style="top:142px">New Component</div>
<div class="mi" style="top:167px">Create Sketch</div>
<div class="mi" style="top:192px">Create Form</div>
<div class="mi" style="top:217px">Derive</div>
<div class="mi" style="top:243px">Extrude</div>
<div class="mi" style="left:318.5px;top:243px">E</div>
<div class="mi" style="top:268px">Revolve</div>
<div class="mi" style="top:293px">Sweep</div>
<div class="mi" style="top:318px">Loft</div>
<div class="mi" style="top:343px">Rib</div>
<div class="mi" style="top:368px">Web</div>
<div class="mi" style="top:393px">Emboss</div>
<div class="mi" style="top:420px">Hole</div>
<div class="mi" style="left:318.5px;top:420px">H</div>
<div class="mi" style="top:445px">Thread</div>
<div class="mi" style="top:471px">Box</div>
<div class="mi" style="top:496px">Cylinder</div>
<div class="mi" style="top:521px">Sphere</div>
<div class="mi" style="top:546px">Torus</div>
<div class="mi" style="top:571px">Coil</div>
<div class="mi" style="top:596px">Pipe</div>
<div class="mi" style="top:622px">Pattern</div>
<svg style="left:345px;top:624.5px" width="9" height="11" viewBox="0 0 9 11"><path d="M0.500 0L9 5.500L0.500 11Z" fill="#1a1a1a"/></svg>
<div class="mi" style="top:647px">Mirror</div>
<div class="mi" style="top:673px">Thicken</div>
<div class="mi" style="top:698px">Boundary Fill</div>
<div class="mi" style="top:725px">Create Base Feature</div>
<div class="mi" style="top:750px">Create PCB</div>
<svg style="left:345px;top:752.5px" width="9" height="11" viewBox="0 0 9 11"><path d="M0.500 0L9 5.500L0.500 11Z" fill="#1a1a1a"/></svg>
<svg style="left:346px;top:319px" width="5" height="15" viewBox="0 0 5 15"><circle cx="2.600" cy="2.200" r="1.250" fill="#111"/><circle cx="2.600" cy="7.300" r="1.250" fill="#111"/><circle cx="2.600" cy="12.400" r="1.250" fill="#111"/></svg>
<svg style="left:0;top:0" width="400" height="780" viewBox="0 0 400 780">
<use href="#icNewComp" transform="translate(169 141) scale(.487) translate(-967.9 -68.25)"/>
<use href="#icSketch" transform="translate(169 165) scale(.495) translate(-171.2 -68)"/>
<use href="#icForm" transform="translate(169 190.9) scale(.485) translate(-440 -68.6)"/>
<use href="#icExtrude" transform="translate(169 241.9) scale(.5) translate(-226.1 -68)"/>
<use href="#icRevolve" transform="translate(169 267.5) scale(.5) translate(-278.75 -69.5)"/>
<use href="#icHole" transform="translate(169 418) scale(.5) translate(-333.3 -68.25)"/>
<!-- derive cy=225 -->
<g transform="translate(168.5 215)">
<path d="M3.500 7.500L8.500 2.200H19.600V14.500L15.600 19.400H3.500Z" fill="#e6e7ea" stroke="#7a7a7a" stroke-width="0.800"/>
<path d="M3.500 7.500H15.600V19.400M15.600 7.500L19.600 2.200" fill="none" stroke="#9a9a9a" stroke-width="0.700"/><path d="M15.600 7.500L19.600 2.200V14.500L15.600 19.400Z" fill="#cfd0d4"/>
<path d="M0.800 14.800Q2.500 10.500 6 11V8.400L10.200 12.300L6 16.200V13.700Q3 13.300 0.800 14.800Z" fill="#333"/>
</g>
<!-- sweep cy=301 -->
<g transform="translate(168.500 291)">
<path d="M0.600 6.500L5.200 1.400H11.300V5.200H19.400V15.200L15.300 19.400H6.900V13.500Q0.600 13.500 0.600 6.500Z" fill="#5aa2de"/>
<path d="M0.600 6.500L5.200 1.400H11.300L8 5.200H19.400L15.300 11.300H6.900Q3 10 0.600 6.500Z" fill="#8ccbf9"/>
<path d="M15.300 11.300L19.400 5.200V15.200L15.300 19.400Z" fill="#4a92cf"/>
<rect x="6.900" y="11.300" width="8.400" height="8.100" fill="#eee" stroke="#8a8a8a" stroke-width="0.800"/>
</g>
<!-- loft cy=326 -->
<g transform="translate(168.500 316)">
<path d="M0.600 1.350H20.400L15.300 10.500H5.200Z" fill="#8ccbf9"/>
<path d="M0.600 1.350L5.200 10.500V16.600L0.600 13.600Z" fill="#5aa2de"/>
<path d="M20.400 1.350V12.500L15.300 15.600V10.500Z" fill="#4a92cf"/>
<path d="M5.200 10.500H15.300V15.600H5.200Z" fill="#6ab0e6"/>
<circle cx="9.700" cy="15.100" r="5.200" fill="#f2f2f2" stroke="#8a8a8a" stroke-width="0.800"/>
</g>
<!-- rib cy=351 -->
<g transform="translate(168.500 341)">
<path d="M0.500 6.300L5.800 1.200V3L2.300 6.500V16.800H14.800L19.800 13.900V15L15 20.300H0.500Z" fill="#cdcdcd"/>
<path d="M2.300 16.800H14.800L19.800 13.900" fill="none" stroke="#e6e6e6" stroke-width="0.600"/>
<path d="M3.200 6.800L14.600 15.200L13 16.800H3.200Z" fill="#6ab0e6"/><path d="M3.200 6.800L14.600 15.200L11 15.200L4.800 10.500Z" fill="#8ccbf9"/>
</g>
<!-- web cy=376 -->
<g transform="translate(168.500 366)">
<path d="M0.500 4.400L3.400 1.400H20.200V17L16.700 20.300H0.500Z" fill="#d8d8d8" stroke="#7a7a7a" stroke-width="0.800"/>
<path d="M16.700 4.400L20.200 1.400V17L16.700 20.300Z" fill="#bdbdbd"/><path d="M0.500 4.400H16.700V20.300" fill="none" stroke="#7a7a7a" stroke-width="0.800"/>
<rect x="2.400" y="6.200" width="12.600" height="12.300" fill="#ececec"/>
<path d="M2.400 10.300H15M2.400 14.500H15M6.500 6.200V18.500M10.800 6.200V18.500" stroke="#9a9a9a" stroke-width="0.700"/>
<path d="M7.600 6.200H11.500V9.700H15V13.300H11.500V18.500H7.600V13.300H2.400V9.700H7.600Z" fill="#4a9ad9"/>
</g>
<!-- emboss cy=401 -->
<g transform="translate(168.500 391)">
<path d="M0.500 1.400Q6 -0.500 12 3.500Q20.200 8.500 20.200 15.800V20.400H0.500Z" fill="#f1f1f1"/>
<path d="M0.500 12Q8 12 8.500 20.400H0.500Z" fill="#d9d9d9"/>
<path d="M4 1Q10 1.500 15 6Q20 11 20.200 20.400" fill="none" stroke="#8a8a8a" stroke-width="0.800"/>
<g transform="translate(9.600 9.600) rotate(-35)" stroke="#4a9ad9" stroke-width="1.700" fill="none"><path d="M3.500 -5H-3.500V5H3.500M-3.500 0H2.500"/></g>
</g>
<!-- thread cy=453 -->
<g transform="translate(168.500 443)">
<rect x="2.800" y="0.400" width="14.300" height="18.900" fill="#ececec" stroke="#8a8a8a" stroke-width="0.800"/>
<path d="M0.800 7.400L20.200 3.700M0.800 11.400L20.200 7.700M0.800 15.400L20.200 11.700" stroke="#2b90ea" stroke-width="1.200"/>
</g>
<!-- box cy=479 -->
<g transform="translate(168.500 469)">
<path d="M0.600 3.500H15.600V19.900H0.600Z" fill="#6ab0e6"/><path d="M0.600 3.500L5.100 0.100H20.200L15.600 3.500Z" fill="#8ccbf9"/><path d="M15.600 3.500L20.200 0.100V15.900L15.600 19.900Z" fill="#4a92cf"/>
</g>
<!-- cylinder cy=504 -->
<g transform="translate(168.500 494)">
<path d="M0.600 3.700V16Q10 21.500 19.500 16V3.700Z" fill="#6ab0e6"/><ellipse cx="10.050" cy="3.700" rx="9.450" ry="3" fill="#8ccbf9"/>
</g>
<!-- sphere cy=529 -->
<g transform="translate(168.500 519)">
<circle cx="10.200" cy="9.900" r="9.700" fill="#6ab0e6"/><path d="M0.500 9.900A9.700 9.700 0 0 1 19.900 9.900Q19.900 11.500 19.500 12.500Q10 15.500 0.900 12.500Q0.500 11.500 0.500 9.900Z" fill="#8ccbf9"/>
</g>
<!-- torus cy=554 -->
<g transform="translate(168.500 544)">
<ellipse cx="10.500" cy="9.900" rx="9.700" ry="7.100" fill="#6ab0e6"/><ellipse cx="10.500" cy="9.300" rx="9.500" ry="6.500" fill="#8ccbf9"/><ellipse cx="10.300" cy="9.300" rx="3.600" ry="1.900" fill="#fff" stroke="#6ab0e6" stroke-width="0.600"/>
</g>
<!-- coil cy=579 -->
<g transform="translate(168.500 569)">
<path d="M2.500 3L17.500 0.900V3.700L2.500 6Z" fill="#6ab0e6"/><path d="M2.500 6L17.500 8.500V11.300L2.500 9Z" fill="#4a92cf"/>
<path d="M2.500 9L17.500 6.500V9.300L2.500 12Z" fill="#6ab0e6"/><path d="M2.500 12L17.500 14.500V17.300L2.500 15Z" fill="#4a92cf"/>
<path d="M2.500 15L17.500 12.500V15.300L2.500 18.300Z" fill="#6ab0e6"/>
</g>
<!-- pipe cy=604 -->
<g transform="translate(168.500 594)">
<path d="M3 9L16 4.300Q19.500 4 19.300 7.500Q19 9.500 17 10.500L4.500 15.200Q0.800 15.500 0.800 12Q1 10 3 9Z" fill="#6ab0e6"/>
<path d="M3 9L16 4.300Q18.500 4 19.200 6L4 11.500Q2.500 10 3 9Z" fill="#8ccbf9"/>
<ellipse cx="3.400" cy="12.200" rx="2.300" ry="3" fill="none" stroke="#4a92cf" stroke-width="0.800" transform="rotate(20 3.400 12.200)"/>
</g>
<!-- mirror cy=655 -->
<g transform="translate(168.500 645)">
<path d="M0.600 18.500L9.100 1.750V18.500Z" fill="#f0f0f0" stroke="#6a6a6a" stroke-width="0.800"/><path d="M10.200 1L19.500 18.500H10.200Z" fill="#4a9ad9"/>
</g>
<!-- thicken cy=681 -->
<g transform="translate(168.500 671)">
<path d="M0.600 10.100L9.900 14.100L19.500 6.900V10.100L9.900 17.300L0.600 13.300Z" fill="#4a9ad9"/>
<path d="M0.600 10.100L10.700 2.900L19.500 6.900L9.900 14.100Z" fill="#f0f0f0" stroke="#6a6a6a" stroke-width="0.800"/>
</g>
<!-- boundary fill cy=706 -->
<g transform="translate(168.500 696)">
<rect x="8" y="1.100" width="12.300" height="11.600" fill="#e8995e"/><circle cx="7.500" cy="11.800" r="6.700" fill="#e8995e"/>
<path d="M8 5.900A6.700 6.700 0 0 1 14.200 12.700H8Z" fill="#6ab0e6" stroke="#d8ecfa" stroke-width="0.700"/>
</g>
<!-- base feature cy=733 -->
<g transform="translate(168.500 723)">
<path d="M0.600 6.800L4 3.200H12L16.500 7.500V15.500L12.300 19.600H0.600Z" fill="#dcdcdc" stroke="#7a7a7a" stroke-width="0.800"/>
<path d="M12.300 11L16.500 7.500V15.500L12.300 19.600Z" fill="#bdbdbd"/><path d="M4 3.200H10L8 7H5.500L8.500 11H12.300" fill="none" stroke="#f4f4f4" stroke-width="0.900"/>
<use href="#star8" transform="translate(14.700 4.900) scale(.52)" fill="#ffa500"/>
</g>
</svg>
<div class="abs" style="left:371.500px;top:319px;width:420px;height:475px;background:#4d4d4d;border-radius:14px"></div>
<div class="tt" style="top:354.500px;letter-spacing:0.028px">Creates a transitional shape between two or more</div>
<div class="tt" style="top:374.500px;letter-spacing:-0.086px">sketch profiles or planar faces.</div>
<div class="tt" style="top:414.500px;letter-spacing:-0.053px">Select a series of profiles or planar faces to define a</div>
<div class="tt" style="top:434.500px;letter-spacing:-0.007px">shape. Optionally select rails or a centerline to guide</div>
<div class="tt" style="top:454.500px;letter-spacing:-0.015px">the shape.</div>
<div class="tt" style="top:769.500px;letter-spacing:0.128px">Press Ctrl+/ for more help.</div>
<svg style="left:0;top:0" width="800" height="800" viewBox="0 0 800 800">
<defs>
<linearGradient id="gL1" gradientUnits="userSpaceOnUse" x1="471" y1="0" x2="684" y2="0">
<stop offset="0" stop-color="#63635a"/><stop offset="0.12" stop-color="#77776c"/><stop offset="0.3" stop-color="#98988b"/><stop offset="0.42" stop-color="#a2a297"/><stop offset="0.475" stop-color="#bcbcb2"/><stop offset="0.505" stop-color="#86867b"/><stop offset="0.62" stop-color="#8c8c80"/><stop offset="0.8" stop-color="#7b7b70"/><stop offset="1" stop-color="#5e5e54"/></linearGradient>
<linearGradient id="gD1" gradientUnits="userSpaceOnUse" x1="471" y1="0" x2="684" y2="0">
<stop offset="0" stop-color="#3f74c2"/><stop offset="0.300" stop-color="#3f76c6"/><stop offset="0.460" stop-color="#5f97e2"/><stop offset="0.500" stop-color="#4d86d6"/><stop offset="0.520" stop-color="#386cbc"/><stop offset="1" stop-color="#2d5ca8"/></linearGradient>
</defs>
<path d="M524.100 534.400L471.200 661.900L577.200 601L683.300 661.900L630.300 534.400Q577 575 524.100 534.400Z" fill="url(#gL1)"/>
<path d="M471.200 661.900L577.200 601L683.300 661.900L577.200 735.900Z" fill="url(#gD1)" stroke="#d9d9d0" stroke-width="1.300" stroke-linejoin="round"/>
<path d="M577.200 601V735.900" stroke="#2d5ca8" stroke-width="0.800" opacity=".6"/>
<path d="M577.200 562V601" stroke="#555" stroke-width="1"/>
<ellipse cx="577.200" cy="534.400" rx="53.100" ry="27.500" fill="#4a72b4" stroke="#d9d9d0" stroke-width="1.200"/>
<ellipse cx="577.200" cy="534.400" rx="51.500" ry="26" fill="none" stroke="#3c6cc8" stroke-width="1"/>
<g fill="#e8e8e8" stroke="#999" stroke-width="0.600"><circle cx="577.200" cy="507.800" r="2.400"/><circle cx="524.500" cy="534.400" r="1.800"/><circle cx="629.800" cy="534.400" r="1.800"/><circle cx="471.200" cy="661.900" r="2.400"/><circle cx="683.300" cy="661.900" r="2.400"/><circle cx="577.200" cy="735.900" r="2.400"/><circle cx="577.200" cy="601" r="2"/></g>
<circle cx="577.200" cy="562" r="3.600" fill="#1e90d8" stroke="#fff" stroke-width="1.500"/><circle cx="577.200" cy="562" r="1.200" fill="#0a3a6a"/>
<circle cx="577.200" cy="534.400" r="1.100" fill="#6aa0f0"/>
<path d="M592 532.500L594.500 534.500H613V545.500H593.500V536Z" fill="#d6d6d6" stroke="#aaa" stroke-width="0.500"/>
<text x="597" y="543" font-size="6" fill="#555" font-family="Liberation Sans">2</text><path d="M608.500 538.500H612L610.250 541.500Z" fill="#222"/>
<path d="M561 672.500L563.500 674.300H594.200V684.900H562V676Z" fill="#d6d6d6" stroke="#aaa" stroke-width="0.500"/>
<text x="565.500" y="682.300" font-size="5.600" fill="#555" font-family="Liberation Sans" font-weight="bold">Profile 1</text>
</svg>
<div class="abs" style="left:0;top:923px;width:1919px;height:60px;background:#f1f1f1;border-top:1px solid #d2d2d2"></div>
<div class="abs" style="left:813px;top:885px;width:296px;height:30px;background:rgba(240,240,240,.92)"></div>
<svg style="left:0;top:0" width="1919" height="983" viewBox="0 0 1919 983">
<!-- playback -->
<g fill="#5a5a5a">
<path d="M13.500 945.500H16V961.500H13.500ZM27.500 945.500V961.500L16.500 953.500Z"/>
<path d="M58 946V961L45.500 953.500ZM59.500 951H61.500V956H59.500Z"/>
<path d="M76 944.500L92.500 953.500L76 962.500Z"/>
<path d="M108.500 946V961L121 953.500ZM105 951H107V956H105Z"/>
<path d="M150 945.500H152.500V961.500H150ZM138.500 945.500V961.500L149.500 953.500Z"/>
</g>
<!-- timeline -->
<path d="M193.500 967V974H403.500V967M222.500 968V974M252.500 968V974M282.500 968V974M312.500 968V974M342.500 968V974M372.500 968V974" fill="none" stroke="#c6c6c6" stroke-width="2"/>
<defs>
<g id="tlSk"><rect x="1.200" y="1.200" width="16.600" height="16.600" fill="none" stroke="#3a8ee0" stroke-width="0.700" stroke-dasharray="1.200 1.200"/><g fill="#2d8ee0"><rect x="0.200" y="0.200" width="2" height="2"/><rect x="16.800" y="0.200" width="2" height="2"/><rect x="0.200" y="16.800" width="2" height="2"/><rect x="4.200" y="4.400" width="1.800" height="1.800"/><rect x="10.600" y="4.400" width="1.800" height="1.800"/><rect x="4.200" y="11.500" width="1.800" height="1.800"/></g><path d="M6 5.300H10.600M5.100 6.200V11.500M11.600 6.200Q11.200 11.500 6 12.400" fill="none" stroke="#777" stroke-width="0.900"/><path d="M10.500 16.200L16.200 10.500L19 13.300L13.300 19Z" fill="#f2b64a"/><path d="M10.500 16.200L13.300 19L9.300 20.200Z" fill="#555"/><path d="M16.200 10.500L17.600 9.100Q18.400 8.600 19.200 9.400L20.100 10.300Q20.800 11.100 20.300 11.900L19 13.300Z" fill="#f04848"/></g>
<g id="tlEx"><path d="M1 5H12.500V17H1Z" fill="#6ab0e6"/><path d="M1 5L4.500 1.500H16L12.500 5Z" fill="#8ccbf9"/><path d="M12.500 5L16 1.500V13.500L12.500 17Z" fill="#4a92cf"/><path d="M1 17.500H12.500L16 14V15.500L12.500 19H1Z" fill="#b0b0b0"/><path d="M18 3V15" stroke="#333" stroke-width="0.700"/><path d="M18 1L16.800 3.500H19.200Z" fill="#333"/></g>
</defs>
<use href="#tlSk" x="183" y="943"/><use href="#tlEx" x="213.500" y="943"/><use href="#tlSk" x="243" y="943"/><use href="#tlEx" x="273.500" y="943"/>
<g transform="translate(303.500 943)"><path d="M0.500 6L5 1.500H8L4.500 6V18.500H0.500Z" fill="#dcdcdc" stroke="#6a6a6a" stroke-width="0.700"/><path d="M5 6L9.500 1.500V14L5 18.500Z" fill="#5cc87c"/><path d="M12 6L17.500 1V13.500L12 18.500Z" fill="#e8995e"/></g>
<use href="#tlSk" x="333" y="943"/><use href="#tlSk" x="363" y="943"/>
<g transform="translate(392.500 943)"><path d="M0.500 1H20L15 9.500H5.500Z" fill="#8ccbf9"/><path d="M0.500 1L5.500 9.500V15L0.500 12.500Z" fill="#5aa2de"/><path d="M20 1V11.500L15 14.500V9.500Z" fill="#4a92cf"/><path d="M5.500 9.500H15V14.500H5.500Z" fill="#6ab0e6"/><circle cx="10" cy="14" r="5" fill="#f4f4f4" stroke="#8a8a8a" stroke-width="0.700"/></g>
<path d="M410 935.500H425V941L419.500 943.500V974H416.500V943.500L410 941Z" fill="#484848"/><rect x="418.200" y="944" width="1.300" height="30" fill="#f1f1f1"/>
<!-- settings gear -->
<g transform="translate(1893.400 953.500)" fill="#868686"><circle r="6.300"/><rect x="-2" y="-9.200" width="4" height="18.400" rx="0.700"/><rect x="-2" y="-9.200" width="4" height="18.400" rx="0.700" transform="rotate(45)"/><rect x="-2" y="-9.200" width="4" height="18.400" rx="0.700" transform="rotate(90)"/><rect x="-2" y="-9.200" width="4" height="18.400" rx="0.700" transform="rotate(135)"/><circle r="2.900" fill="#f1f1f1"/></g>
<!-- autodesk badge -->
<path d="M1894.500 895.100a8.200 8.200 0 1 0 0 16.400h8.300v-8.200a8.200 8.200 0 0 0 -8.300 -8.200z" fill="#050505"/><path d="M1888.800 907V903.800L1895.600 900.200H1900.300V903.400Q1895.500 902.600 1888.800 907ZM1896.300 905.200H1900.300V907H1896.300Z" fill="#fff"/>
<!-- nav bar icons -->
<defs><linearGradient id="gGr" x1="0" y1="0" x2="0" y2="1"><stop offset="0" stop-color="#fdfdfd"/><stop offset="1" stop-color="#a4a8b0"/></linearGradient>
<linearGradient id="gLk" x1="0" y1="0" x2="0" y2="1"><stop offset="0" stop-color="#8c8c8c"/><stop offset="1" stop-color="#d0d0d0"/></linearGradient>
<radialGradient id="gLens" cx="0.4" cy="0.35" r="0.7"><stop offset="0" stop-color="#ffffff"/><stop offset="1" stop-color="#d4e2e6"/></radialGradient></defs>
<!-- orbit -->
<ellipse cx="826.700" cy="900.800" rx="8.600" ry="3.100" fill="none" stroke="#666" stroke-width="1.100"/>
<path d="M819 901.500L817.800 904.300L821.400 903.800Z" fill="#555"/>
<path d="M826.700 890L830.200 894.800H828.300V908H825.100V894.800H823.200Z" fill="#fff" stroke="#666" stroke-width="0.900" stroke-linejoin="round"/>
<path d="M835.300 900.800Q835.300 903.900 826.700 903.900" fill="none" stroke="#666" stroke-width="1.100"/>
<path d="M843.300 898H850L846.650 902.600Z" fill="#222"/>
<!-- look at -->
<path d="M861.500 895.500L863.500 892.800L867 894L869.500 892.500L872.500 893.200V895.500" fill="#e0e0e0" stroke="#888" stroke-width="0.900"/>
<rect x="859.300" y="895.500" width="16.700" height="12.700" fill="#ececec" stroke="#8a8a8a" stroke-width="1.100"/><rect x="861.800" y="899.500" width="11.700" height="6.200" fill="url(#gLk)" stroke="#777" stroke-width="0.800"/>
<!-- hand -->
<path d="M894.800 900.500V893.800Q894.800 892.300 896 892.300Q897.200 892.300 897.200 893.800V891.500Q897.400 890.200 898.600 890.200Q899.800 890.200 899.800 891.500V890.900Q900 889.600 901.200 889.600Q902.400 889.600 902.400 891V892Q902.700 890.900 903.800 890.900Q905 890.900 905 892.300V895Q907 893.500 908.500 894.500Q909.300 895.300 908.300 896.800Q906.300 900 905.800 903Q905 908.200 899.800 908.200Q896 908.200 894.300 905L891.600 900.300Q891 899 892 898.400Q893.300 898 894.800 900.500Z" fill="#fafafa" stroke="#666" stroke-width="0.900" stroke-linejoin="round"/>
<path d="M897.200 893.800V899M899.800 891.500V899M902.400 892V899M905 895V900" fill="none" stroke="#777" stroke-width="0.700"/>
<!-- zoom -->
<circle cx="929.200" cy="897.600" r="6" fill="url(#gLens)" stroke="#666" stroke-width="1.200"/><path d="M933.700 902.100L940.800 907.800" stroke="#444" stroke-width="2.300" stroke-linecap="round"/><path d="M937.700 892.700H941.700M939.700 890.700V894.700M937.700 896.300H941.700" stroke="#555" stroke-width="0.900"/>
<!-- zoom window -->
<rect x="955.500" y="891.500" width="18.300" height="17.500" fill="none" stroke="#999" stroke-width="0.800" stroke-dasharray="2.500 1.500"/><circle cx="962.600" cy="897.900" r="6.300" fill="url(#gLens)" stroke="#666" stroke-width="1.200"/><path d="M967.300 902.600L973.300 907.800" stroke="#444" stroke-width="2.300" stroke-linecap="round"/>
<path d="M981.300 898H988L984.650 902.600Z" fill="#222"/>
<!-- display -->
<rect x="997.600" y="890.700" width="18.300" height="15.100" rx="1" fill="#e4e4e4" stroke="#777" stroke-width="1"/><rect x="999.300" y="892.400" width="14.900" height="11.700" fill="#a3bbe3" stroke="#5a78a8" stroke-width="0.800"/><path d="M1004.500 905.800V907.600H1009V905.800" fill="#ccc" stroke="#777" stroke-width="0.800"/><path d="M1002 908.400H1011.500" stroke="#777" stroke-width="1.300"/>
<path d="M1019.300 898H1026L1022.650 902.600Z" fill="#222"/>
<!-- grid -->
<rect x="1035.800" y="891.500" width="18.200" height="16.700" fill="url(#gGr)" stroke="#666" stroke-width="0.900"/><path d="M1038.800 891.500V908.200M1041.800 891.500V908.200M1044.800 891.500V908.200M1047.800 891.500V908.200M1050.800 891.500V908.200M1035.800 894.300H1054M1035.800 897.100H1054M1035.800 899.900H1054M1035.800 902.700H1054M1035.800 905.500H1054" stroke="#777" stroke-width="0.700"/>
<path d="M1058.200 898H1064.900L1061.550 902.600Z" fill="#222"/>
<!-- viewports -->
<rect x="1074.200" y="892.300" width="18.500" height="15.100" fill="#7b9fd9" stroke="#4a6aa8" stroke-width="0.900"/><path d="M1083.450 892.300V907.400" stroke="#4a6aa8" stroke-width="1.300"/><path d="M1075 899H1082.500M1075 900.700H1082.500M1084.400 899H1092M1084.400 900.700H1092" stroke="#a9c2ea" stroke-width="0.800"/>
<path d="M1096.400 898H1103.100L1099.750 902.600Z" fill="#222"/>
</svg>
</body></html>
